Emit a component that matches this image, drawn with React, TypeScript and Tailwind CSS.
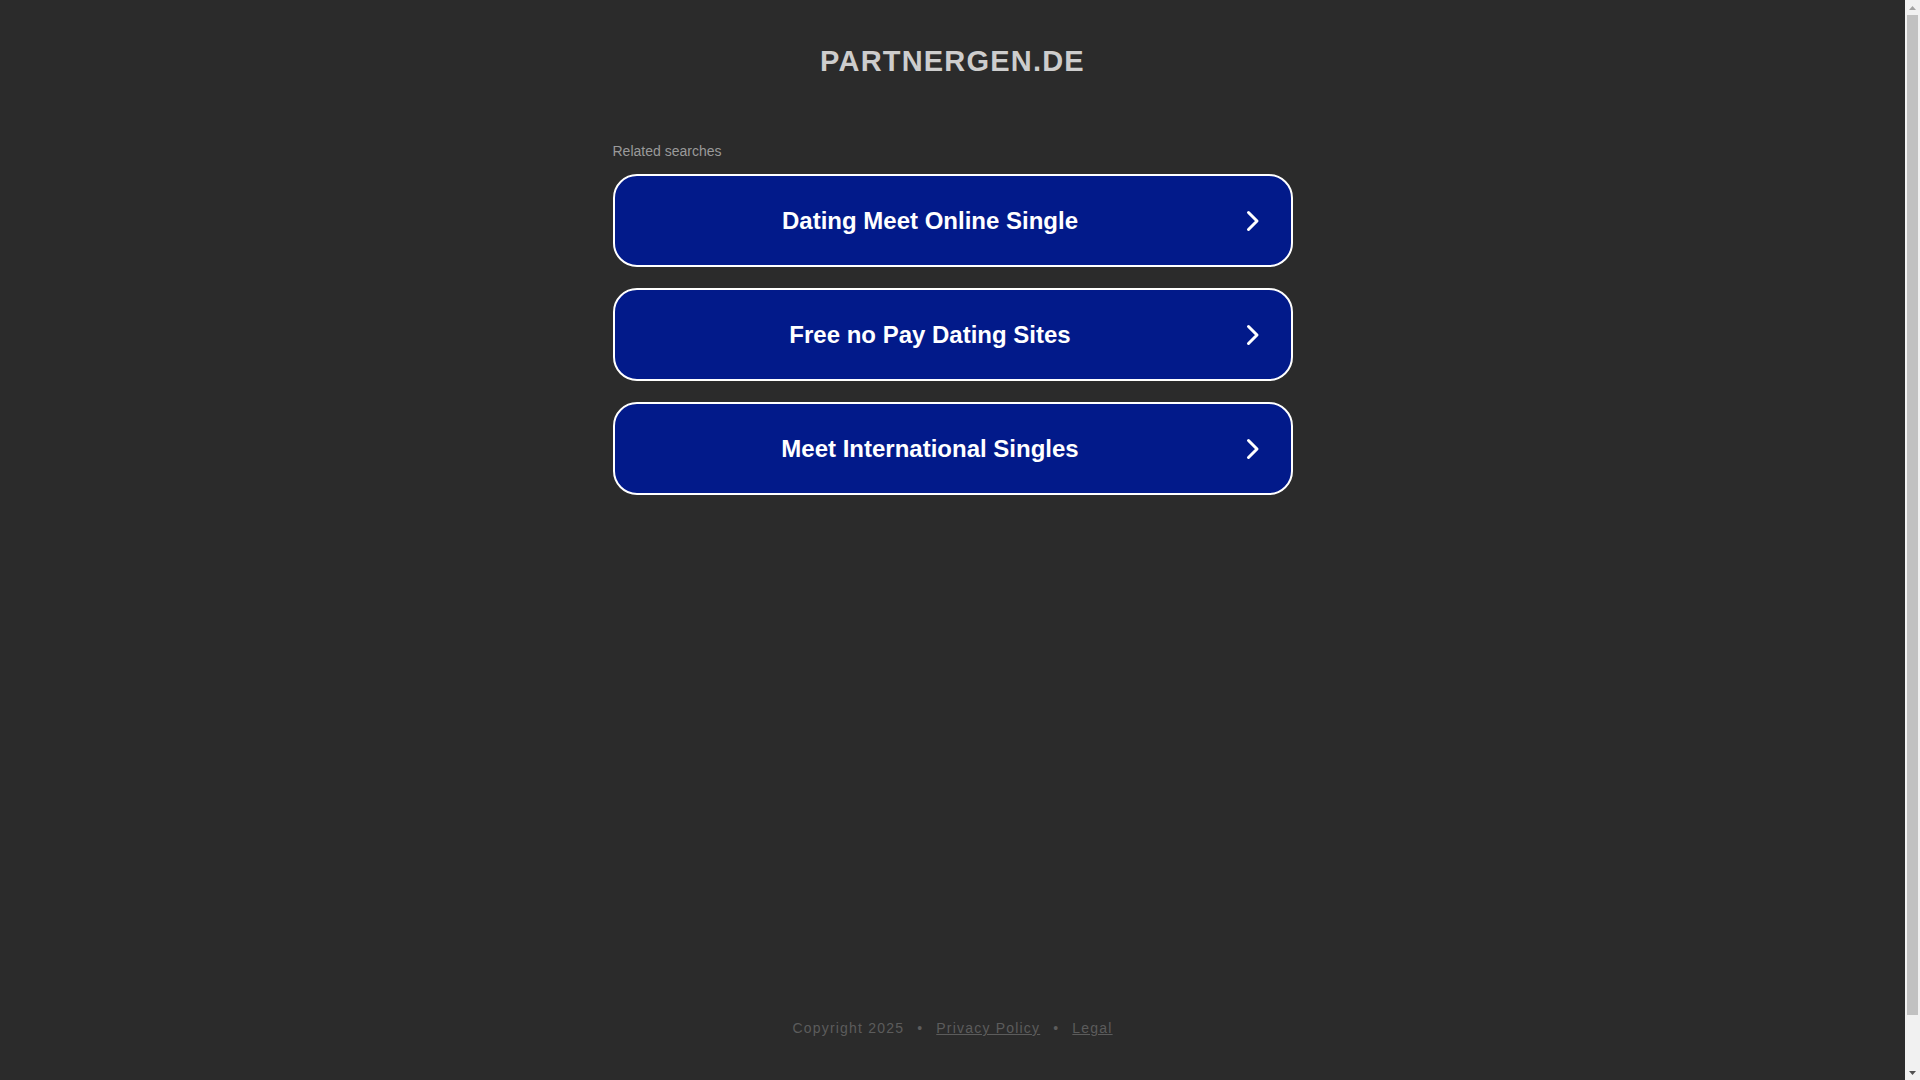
import React from "react";

const items = ["Dating Meet Online Single", "Free no Pay Dating Sites", "Meet International Singles"];

function Chevron() {
  return (
    <svg width="14" height="22" viewBox="0 0 14 22" className="shrink-0" aria-hidden="true">
      <path d="M2.5 2.5 L11 11 L2.5 19.5" fill="none" stroke="#ffffff" strokeWidth="3" strokeLinecap="round" strokeLinejoin="round" />
    </svg>
  );
}

function Scrollbar() {
  return (
    <div className="flex h-screen w-[15px] shrink-0 flex-col bg-[#f1f1f1]">
      <div className="flex h-[15px] items-center justify-center">
        <svg width="7" height="4" viewBox="0 0 7 4" aria-hidden="true">
          <path d="M3.5 0 L7 4 L0 4 Z" fill="#a3a3a3" />
        </svg>
      </div>
      <div className="flex flex-1 flex-col px-[2px]">
        <div className="h-[1000px] w-full bg-[#c1c1c1]" />
      </div>
      <div className="flex h-[15px] items-center justify-center">
        <svg width="7" height="4" viewBox="0 0 7 4" aria-hidden="true">
          <path d="M0 0 L7 0 L3.5 4 Z" fill="#505050" />
        </svg>
      </div>
    </div>
  );
}

export default function App() {
  return (
    <div
      className="flex h-screen overflow-hidden bg-[#2b2b2b]"
      style={{ fontFamily: '"Liberation Sans", Arial, Helvetica, sans-serif' }}
    >
      <div className="flex h-screen flex-1 flex-col">
        <div className="mx-auto flex w-[680px] flex-col">
          <h1 className="mt-[45px] text-center text-[29px] font-bold leading-[32px] tracking-[1.2px] text-[#cdcdcd]">
            PARTNERGEN.DE
          </h1>
          <div className="mt-[64px] text-[14px] leading-[20px] text-[#9a9a9a]">Related searches</div>
          <div className="mt-[13px] flex flex-col gap-[21px]">
            {items.map((t) => (
              <a
                key={t}
                href="#"
                className="flex h-[93px] items-center rounded-[24px] border-2 border-white bg-[#021a8a] text-white"
              >
                <span className="flex-1 text-center text-[24px] font-bold leading-[28px]">{t}</span>
                <span className="mr-[31px] flex">
                  <Chevron />
                </span>
              </a>
            ))}
          </div>
        </div>
        <div className="flex-1" />
        <div className="flex items-center justify-center pb-[42px] text-[14px] leading-[20px] tracking-[1.2px] text-[#5c5c5c]">
          <span>Copyright 2025</span>
          <span className="mx-[13px]">•</span>
          <a href="#" className="underline">Privacy Policy</a>
          <span className="mx-[13px]">•</span>
          <a href="#" className="underline">Legal</a>
        </div>
      </div>
      <Scrollbar />
    </div>
  );
}
